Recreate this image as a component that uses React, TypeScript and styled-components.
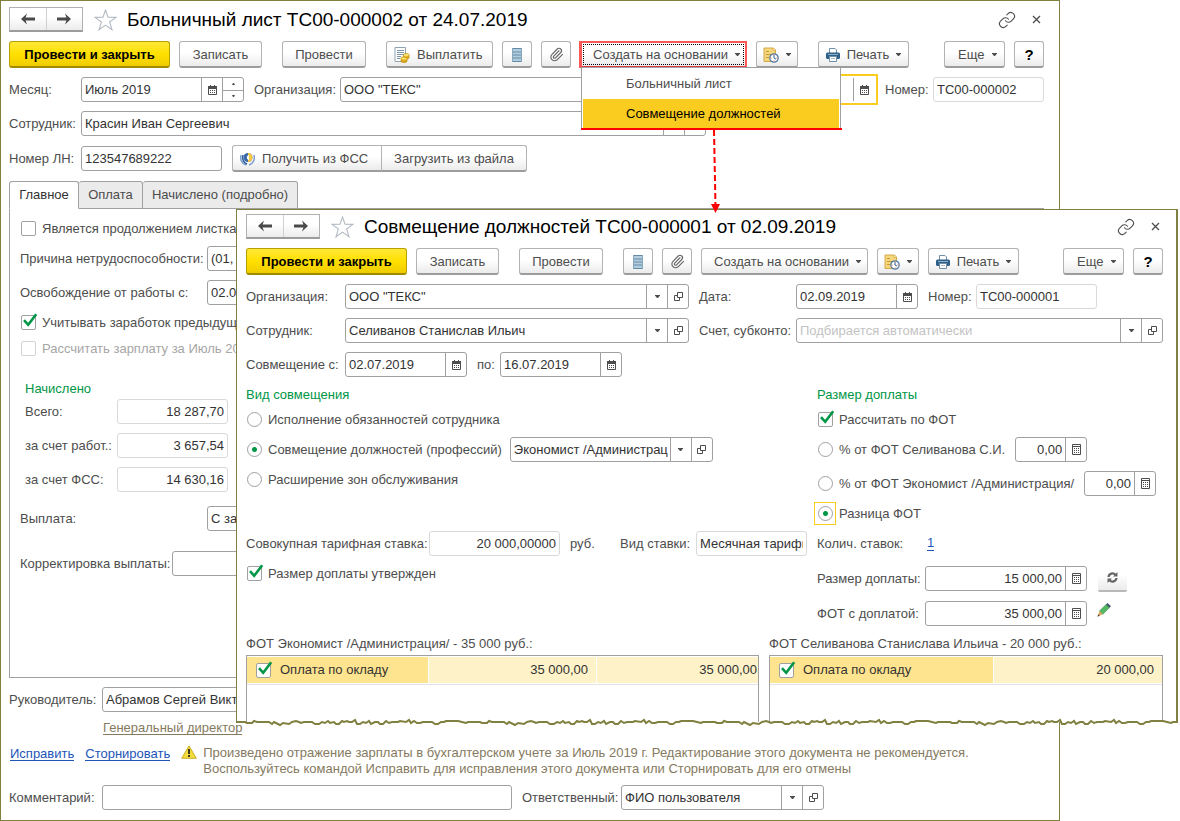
import React from 'react';
import styled, { createGlobalStyle, css } from 'styled-components';
import { Link, Paperclip } from 'lucide-react';

const OLIVE = '#808040';
const LINE = '#a0a0a0';
const GREEN = '#009646';
const AMBER = '#fbcc20';

const GlobalStyle = createGlobalStyle`
  *, *::before, *::after { box-sizing: border-box; }
  body {
    margin: 0;
    background: #fff;
    color: #4d4d4d;
    font: 13px/16px "Liberation Sans", Arial, sans-serif;
  }
  button, input, select {
    margin: 0;
    padding: 0;
    font: inherit;
    color: inherit;
  }
  svg { display: block; flex: none; }
`;

/* ---------- windows ---------- */

const Desktop = styled.main`
  position: relative;
  min-width: 1100px;
`;

const BackWindow = styled.section`
  display: flex;
  flex-direction: column;
  gap: 9px;
  margin-right: 120px;
  padding: 6px 15px 10px 8px;
  border: 1px solid ${OLIVE};
`;

const FrontWindow = styled.section`
  position: absolute;
  z-index: 1;
  top: 209px;
  left: 236px;
  right: 2px;
  display: flex;
  flex-direction: column;
  gap: 9px;
  padding: 4px 13px 0 9px;
  background: #fff;
  border: solid ${OLIVE};
  border-width: 1px 2px 0 1px;
`;

const TornSvg = styled.svg`
  position: absolute;
  left: -1px;
  bottom: -6px;
  width: calc(100% + 3px);
  height: 12px;
`;

/* ---------- title bar ---------- */

const TitleBar = styled.header`
  display: flex;
  align-items: center;
  height: 25px;
`;

const NavGroup = styled.div`
  display: flex;
  width: 74px;
  height: 25px;
  border: 1px solid #b0b0b0;
  border-bottom: 2px solid #9c9c9c;
  background: linear-gradient(#fff 40%, #ececec);
`;

const NavButton = styled.button`
  flex: 1;
  display: grid;
  place-items: center;
  border: 0;
  background: none;
  & + & { border-left: 1px solid #d0d0d0; }
`;

const PlainButton = styled.button`
  display: grid;
  place-items: center;
  border: 0;
  background: none;
`;

const StarButton = styled(PlainButton)`
  margin: 0 10px 0 11px;
`;

const Title = styled.h1`
  margin: 0;
  font-size: 19px;
  line-height: 24px;
  font-weight: 400;
  color: #000;
  white-space: nowrap;
`;

const TitleTools = styled.div`
  display: flex;
  align-items: center;
  gap: 16px;
  margin-left: auto;
  padding-right: 3px;
`;

/* ---------- buttons ---------- */

const Toolbar = styled.div`
  display: flex;
  gap: 9px;
`;

const Cluster = styled.div<{ $gap?: number; $push?: boolean }>`
  display: flex;
  gap: 9px;
  margin-left: ${p => (p.$push ? 'auto' : `${p.$gap ?? 0}px`)};
`;

const Button = styled.button<{ $w: number; $align?: string; $marked?: boolean }>`
  display: flex;
  align-items: center;
  justify-content: ${p => p.$align ?? 'center'};
  gap: 7px;
  width: ${p => p.$w}px;
  height: 27px;
  padding: 1px 7px 0;
  border: 1px solid #b3b3b3;
  border-bottom: 2px solid #9c9c9c;
  border-radius: 3px;
  background: linear-gradient(#fff 45%, #ebebeb);
  white-space: nowrap;
  ${p =>
    p.$marked &&
    css`
      border: 2px solid #f85a5a;
      border-bottom-color: #e03c46;
      border-radius: 0;
      box-shadow: -1px 0 0 #f85a5a;
      outline: 1px dotted #000;
      outline-offset: -4px;
      padding: 0 6px;
    `}
`;

const Caption = styled.span`
  padding-left: 6px;
  margin-right: auto;
`;

const PrimaryButton = styled(Button)`
  border-color: #b8a000;
  border-bottom-color: #a08a00;
  background: linear-gradient(#ffe838, #ffe000 50%, #f0cc00);
  color: #000;
  font-weight: 700;
`;

const HelpButton = styled(Button)`
  color: #000;
  font-size: 15px;
  font-weight: 700;
`;

const JoinedButtons = styled.div`
  display: flex;
  margin-left: 10px;
  ${Button}:first-child { border-radius: 3px 0 0 3px; }
  ${Button}:last-child { border-radius: 0 3px 3px 0; margin-left: -1px; }
`;

const MenuAnchor = styled.div`
  position: relative;
`;

const Menu = styled.div`
  position: absolute;
  top: 26px;
  left: 1px;
  width: 260px;
  padding: 1px 1px 0;
  background: #fff;
  border: 1px solid ${LINE};
  border-bottom: 0;
`;

const MenuItem = styled.button<{ $active?: boolean }>`
  display: block;
  width: 100%;
  height: 30px;
  padding: 0 0 0 43px;
  border: 0;
  background: ${p => (p.$active ? AMBER : '#fff')};
  color: ${p => (p.$active ? '#000' : '#4d4d4d')};
  text-align: left;
  & + & { height: 29px; }
`;

const MenuUnderline = styled.div`
  height: 2px;
  margin: 0 -3px 0 -2px;
  background: #ff0000;
`;

const ArrowSvg = styled.svg`
  position: absolute;
  z-index: 2;
  top: 88px;
  left: 128px;
`;

/* ---------- form rows and fields ---------- */

const Row = styled.div<{ $h?: number; $mt?: number }>`
  display: flex;
  align-items: center;
  height: ${p => p.$h ?? 25}px;
  margin-top: ${p => p.$mt ?? 0}px;
`;

const Label = styled.label<{ $w?: number; $gap?: number }>`
  flex: none;
  width: ${p => (p.$w ? `${p.$w}px` : 'auto')};
  margin-left: ${p => p.$gap ?? 0}px;
  white-space: nowrap;
`;

const FieldBox = styled.div<{ $w?: number; $gap?: number; $soft?: boolean; $focus?: boolean }>`
  flex: ${p => (p.$w ? `0 0 ${p.$w}px` : '1 1 0')};
  display: flex;
  min-width: 0;
  height: 25px;
  margin-left: ${p => p.$gap ?? 0}px;
  border: 1px solid ${p => (p.$focus ? '#fff' : p.$soft ? '#d9d9d9' : LINE)};
  border-radius: 3px;
  background: #fff;
  color: #333;
  ${p => p.$focus && css`border-radius: 0; outline: 2px solid ${AMBER}; outline-offset: 1px;`}
`;

const TextInput = styled.input<{ $right?: boolean }>`
  flex: 1;
  width: 0;
  min-width: 0;
  padding: 0 3px;
  border: 0;
  outline: 0;
  background: none;
  text-align: ${p => (p.$right ? 'right' : 'left')};
`;

const SideButton = styled.button`
  flex: 0 0 21px;
  display: grid;
  place-items: center;
  border: 0;
  border-left: 1px solid ${LINE};
  background: none;
`;

const Spinner = styled.div`
  flex: 0 0 21px;
  display: grid;
  grid-template-rows: 1fr 1fr;
  border-left: 1px solid ${LINE};
`;

const SpinButton = styled.button`
  display: grid;
  place-items: center;
  border: 0;
  background: none;
  & + & { border-top: 1px solid ${LINE}; }
`;

const SelectCell = styled.div`
  flex: 1;
  min-width: 0;
  display: grid;
  grid-template-columns: minmax(0, 1fr);
  > * { grid-area: 1 / 1; }
`;

const Select = styled.select<{ $empty?: boolean }>`
  appearance: none;
  width: 100%;
  padding: 0 23px 0 3px;
  border: 0;
  outline: 0;
  background: none;
  color: ${p => (p.$empty ? '#c3c3c3' : '#333')};
`;

const SelectArrow = styled.span`
  justify-self: end;
  display: grid;
  place-items: center;
  width: 21px;
  border-left: 1px solid ${LINE};
  pointer-events: none;
`;

const CheckLabel = styled.label<{ $off?: boolean }>`
  display: flex;
  align-items: center;
  gap: 6px;
  height: 17px;
  white-space: nowrap;
  color: ${p => (p.$off ? '#a6a6a6' : 'inherit')};
`;

const MarkCell = styled.span<{ $focus?: boolean }>`
  display: grid;
  grid-template-columns: 15px;
  justify-content: end;
  align-items: center;
  width: 16px;
  height: 17px;
  ${p => p.$focus && css`outline: 1px solid ${AMBER}; outline-offset: 2px;`}
  > * { grid-area: 1 / 1; }
  svg { pointer-events: none; overflow: visible; }
`;

const CheckInput = styled.input`
  appearance: none;
  width: 15px;
  height: 15px;
  border: 1px solid ${LINE};
  border-radius: 2px;
  background: #fff;
  & + svg { visibility: hidden; }
  &:checked + svg { visibility: visible; }
  &:disabled { border-color: #d4d4d4; }
`;

const RadioInput = styled.input`
  appearance: none;
  width: 15px;
  height: 15px;
  border: 1px solid ${LINE};
  border-radius: 50%;
  background: #fff;
  &:checked { background: radial-gradient(circle, ${GREEN} 2px, #fff 3px); }
`;

const GroupTitle = styled.h2`
  margin: 0;
  height: 16px;
  font-size: 13px;
  line-height: 17px;
  font-weight: 400;
  color: ${GREEN};
`;

/* ---------- tabs ---------- */

const TabArea = styled.div``;

const TabList = styled.div`
  position: relative;
  display: flex;
  margin-bottom: -1px;
`;

const Tab = styled.button<{ $w: number; $active?: boolean }>`
  width: ${p => p.$w}px;
  height: 28px;
  padding: 0;
  border: 1px solid ${LINE};
  border-left-width: ${p => (p.$active ? 1 : 0)}px;
  border-bottom-color: ${p => (p.$active ? '#fff' : LINE)};
  border-radius: 3px 3px 0 0;
  background: ${p => (p.$active ? '#fff' : '#ebebeb')};
  color: ${p => (p.$active ? '#333' : '#4d4d4d')};
`;

const TabPanel = styled.div`
  display: flex;
  flex-direction: column;
  gap: 9px;
  padding: 11px 10px 101px;
  border: 1px solid ${LINE};
`;

const Accrued = styled.section`
  display: flex;
  flex-direction: column;
  gap: 9px;
  padding: 14px 0 0 5px;
  ${GroupTitle} { margin-bottom: -6px; }
`;

/* ---------- footer of the sick-leave document ---------- */

const RoleLink = styled.a`
  align-self: flex-start;
  margin-left: 94px;
  height: 14px;
  line-height: 13px;
  border-bottom: 1px solid #857a60;
  color: #857a60;
  text-decoration: none;
`;

const Notice = styled.div`
  display: flex;
  gap: 11px;
  height: 32px;
  padding: 1px 0 0 1px;
`;

const ActionLink = styled.a`
  height: 16px;
  line-height: 17px;
  border-bottom: 1px solid #1d55b8;
  color: #1d55b8;
  text-decoration: none;
`;

const NoticeBody = styled.div`
  display: flex;
  gap: 6px;
`;

const NoticeText = styled.p`
  margin: 0;
  color: #857a60;
`;

/* ---------- combination document ---------- */

const Columns = styled.div`
  display: grid;
  grid-template-columns: minmax(561px, 1fr) 346px;
  column-gap: 10px;
`;

const Column = styled.div`
  display: flex;
  flex-direction: column;
  gap: 9px;
`;

const CountLink = styled.a`
  margin-left: 24px;
  border-bottom: 1px solid #1d55b8;
  line-height: 14px;
  color: #1d55b8;
  text-decoration: none;
`;

const RefreshButton = styled.button`
  display: grid;
  place-items: center;
  width: 29px;
  height: 27px;
  margin-left: 11px;
  border: 0;
  border-bottom: 2px solid #b8b8b8;
  border-radius: 2px;
  background: linear-gradient(#fff 40%, #ebebeb);
`;

const PencilButton = styled(PlainButton)`
  margin: 0 0 8px 10px;
`;

const TableColumns = styled.div`
  display: grid;
  grid-template-columns: 513fr 394fr;
  column-gap: 10px;
`;

const TableBlock = styled.section`
  display: flex;
  flex-direction: column;
  gap: 3px;
  padding-top: 1px;
`;

const TableFrame = styled.div`
  height: 67px;
  padding-top: 1px;
  border: solid ${LINE};
  border-width: 1px 1px 0;
`;

const Table = styled.table`
  width: 100%;
  table-layout: fixed;
  border-collapse: separate;
  border-spacing: 0;
  border-bottom: 1px solid #e3e3e3;
  color: #333;
`;

const Cell = styled.td<{ $main?: boolean; $w?: number; $tight?: boolean }>`
  width: ${p => (p.$w ? `${p.$w}px` : 'auto')};
  height: 27px;
  padding: 0 ${p => (p.$tight ? 1 : 8)}px 0 8px;
  border-bottom: 1px solid #fff;
  background: ${p => (p.$main ? '#ffe48f' : '#fdf2c8')};
  text-align: ${p => (p.$main ? 'left' : 'right')};
  & + & { border-left: 1px solid #fff; }
  ${CheckLabel} { gap: 9px; color: #333; }
`;

/* ---------- icons ---------- */

const Caret = () => (
  <svg width="5" height="3" viewBox="0 0 5 3" fill="#4d4d4d"><path d="M0 0h5v.6L3 3H2L0 .6z" /></svg>
);

const SmallCaret = ({ up }: { up?: boolean }) => (
  <svg width="3" height="2" viewBox="0 0 3 2" fill="#4d4d4d"><path d={up ? 'M0 2h3L2 0H1z' : 'M0 0h3L2 2H1z'} /></svg>
);

const ArrowIcon = ({ right }: { right?: boolean }) => (
  <svg width="14" height="12" viewBox="0 0 14 12" fill="#4a4a4a">
    <path d={right ? 'M14 6 8 .5 9.400 4.500H0v3h9.400L8 11.500z' : 'M0 6 6 .5 4.600 4.500H14v3H4.600L6 11.500z'} />
  </svg>
);

const StarIcon = () => (
  <svg width="23" height="22" viewBox="0 0 23 22" fill="#fff" stroke="#b4bbc4" strokeWidth="1.1">
    <path d="M11.500 1 14 8.300 22 8.400 15.600 13 18 20.800 11.500 16.100 5 20.800 7.400 13 1 8.400 9 8.300z" />
  </svg>
);

const CloseIcon = () => (
  <svg width="9" height="9" viewBox="0 0 9 9" stroke="#4d4d4d" strokeWidth="1.3"><path d="m1 1 7 7M8 1 1 8" /></svg>
);

const ListIcon = () => (
  <svg width="10" height="14" viewBox="0 0 10 14">
    <rect width="10" height="14" fill="#b3cddd" />
    <path d="M0 .5h10M0 4h10M0 7h10M0 10h10M0 13.500h10" stroke="#628aa6" />
    <path d="M.5 0v14M9.500 0v14" stroke="#86a8bf" />
  </svg>
);

const PayIcon = () => (
  <svg width="16" height="16" viewBox="0 0 16 16">
    <path d="M1 .5h10.500v9L8 14.500H1z" fill="#fff" stroke="#8ea3b4" />
    <path d="M3 3.500h7M3 5.500h7M3 7.500h7M3 9.500h4M3 11.500h3" stroke="#7f95a6" />
    <path d="M7 11v3c0 1 1 1.500 3 1.500s3-.5 3-1.500v-2c1 0 2-.5 2-1V8c0-1-1-1.500-2.700-1.500S9.500 7 9.500 8v2C8 10 7 10.300 7 11z" fill="#e8b923" stroke="#b98a10" strokeWidth=".7" />
    <ellipse cx="12.200" cy="8" rx="2.500" ry="1.100" fill="#fbe27a" />
    <ellipse cx="10" cy="11.500" rx="2.700" ry="1.100" fill="#fbe27a" />
    <path d="M7 13.500c1 1 5 1 6 0M10 10c1 .8 4 .8 5 0" fill="none" stroke="#b98a10" strokeWidth=".6" />
  </svg>
);

const ScheduleIcon = () => (
  <svg width="16" height="16" viewBox="0 0 16 16">
    <path d="M1 1h9.500l2 2v11.500H1z" fill="#f6d77c" stroke="#d0a848" />
    <path d="M10 1v2.500h2.500" fill="#fff1b8" stroke="#d0a848" strokeWidth=".7" />
    <path d="M3 4.500h3M3 7.500h5M3 10.500h3" stroke="#c39a3a" />
    <circle cx="11" cy="11" r="4.200" fill="#fff" stroke="#4d7ba5" strokeWidth="1.200" />
    <path d="M11 8.200V11l2 1.200" stroke="#27618f" fill="none" />
    <path d="M11 7.500v1M11 13.500v1M7.500 11h1M13.500 11h1" stroke="#d65a4a" />
  </svg>
);

const PrintIcon = () => (
  <svg width="14" height="14" viewBox="0 0 14 14">
    <path d="M3.500 6V.5H9L10.500 2v4" fill="#fff" stroke="#6f90aa" />
    <rect y="4.500" width="14" height="6.500" rx="1.500" fill="#2f608a" />
    <path d="M2 6.500h10" stroke="#8fb0c8" />
    <path d="M3.500 8.500h7v5h-7z" fill="#fff" stroke="#6f90aa" />
    <path d="M5 10.500h4" stroke="#a9bccb" />
  </svg>
);

const FssIcon = () => (
  <svg width="15" height="14" viewBox="0 0 15 14">
    <path d="M1.200 3C-.5 7 2 12 6 13M13.800 3c1.700 4-.8 9-4.800 10" fill="none" stroke="#7f9fcd" strokeWidth="1.500" />
    <path d="M3 3C1.500 7 4 11 7 12.200" fill="none" stroke="#2f5d9e" strokeWidth="1.500" />
    <circle cx="8" cy="5.500" r="4.500" fill="#3767a8" />
    <path d="M8 1a4.500 4.500 0 0 1 0 9z" fill="#f7c843" />
    <path d="M9 3C6 3.500 6 7.500 9 8z" fill="#fff" />
  </svg>
);

const CalendarIcon = () => (
  <svg width="9" height="10" viewBox="0 0 9 10">
    <path d="M.5 2.500h8v7h-8z" fill="#fff" stroke="#4d4d4d" />
    <path d="M0 1h9v3H0zM2 0h1v2H2zM6 0h1v2H6z" fill="#4d4d4d" />
    <path d="M2 5.500h5M2 7.500h5" stroke="#4d4d4d" strokeDasharray="1 1" />
  </svg>
);

const CalcIcon = () => (
  <svg width="9" height="11" viewBox="0 0 9 11">
    <path d="M.5.5h8v10h-8z" fill="#fff" stroke="#4d4d4d" />
    <path d="M1 2.500h7" stroke="#4d4d4d" />
    <path d="M2 4.500h5M2 6.500h5M2 8.500h5" stroke="#4d4d4d" strokeDasharray="1 1" />
  </svg>
);

const OpenIcon = () => (
  <svg width="9" height="9" viewBox="0 0 9 9" fill="none" stroke="#4d4d4d">
    <path d="M3.500.5h5v5h-5zM3 3.500H.5v5h5V6" />
  </svg>
);

const CheckIcon = () => (
  <svg width="15" height="15" viewBox="0 0 15 15" fill="none" stroke={GREEN} strokeWidth="2.600">
    <path d="M3 5.200 7.200 9.800 15.200 -.8" />
  </svg>
);

const RefreshIcon = () => (
  <svg width="11" height="11" viewBox="0 0 11 11">
    <path d="M1.500 5A4 4 0 0 1 8.500 2.800M9.500 6A4 4 0 0 1 2.500 8.200" fill="none" stroke="#666" strokeWidth="2.200" />
    <path d="M10.500 0v4.500H6zM.5 11V6.500H5z" fill="#666" />
  </svg>
);

const PencilIcon = () => (
  <svg width="14" height="14" viewBox="0 0 14 14">
    <path d="M2.500 8 9 1.500 12.300 4.800 5.800 11.300z" fill="#53b963" stroke="#3d8d4b" strokeWidth=".6" />
    <path d="M9 1.500 10.500 0 14 3.300 12.300 4.800z" fill="#3e5567" />
    <path d="M2.500 8 .8 13.200 5.800 11.300z" fill="#d9a35a" />
    <path d="M1.300 11.300.3 13.700l2.500-1z" fill="#5a3d20" />
  </svg>
);

const WarningIcon = () => (
  <svg width="16" height="14" viewBox="0 0 16 14">
    <path d="M8 .8 15.300 13.300H.7z" fill="#f3dc3c" stroke="#c9ae2a" strokeLinejoin="round" />
    <path d="M7 4h2v5H7zM7 10h2v2H7z" fill="#3f3a1c" />
  </svg>
);

const tearProfile: Array<[number, number]> = [
  [0, 6], [9, 6], [11, 7], [16, 7], [18, 5], [21, 6], [30, 6], [33, 6], [36, 8], [38, 6], [42, 8], [44, 9],
  [47, 7], [53, 8], [56, 6], [60, 5], [63, 6], [65, 7], [68, 6], [76, 6], [79, 8], [83, 8], [86, 6], [89, 7],
  [92, 5], [94, 7], [98, 6], [100, 8], [103, 8], [106, 5], [108, 6], [111, 5], [113, 6], [116, 6], [119, 4],
  [121, 8], [124, 8], [127, 6], [130, 7], [133, 5], [135, 8], [139, 6], [142, 6], [144, 8], [147, 8], [150, 5],
  [153, 7], [156, 6], [162, 6], [164, 5], [170, 6], [173, 4], [175, 7], [178, 5], [181, 7], [184, 7], [187, 6],
  [196, 6], [199, 8], [202, 8], [205, 6], [208, 6], [210, 5], [222, 5], [226, 6], [230, 7], [232, 6],
];

const tearPath =
  'M' +
  [0, 235, 470, 705]
    .flatMap(shift => tearProfile.map(([x, y]) => `${x + shift} ${y}`))
    .concat('942 6')
    .join('L');

const TornEdge = () => (
  <TornSvg viewBox="0 0 942 12" preserveAspectRatio="none" aria-hidden="true">
    <path d={tearPath} fill="none" stroke={OLIVE} strokeWidth="2" vectorEffect="non-scaling-stroke" />
  </TornSvg>
);

/* ---------- composed controls ---------- */

type FieldProps = {
  id: string;
  value: string;
  w?: number;
  gap?: number;
  soft?: boolean;
  focus?: boolean;
  right?: boolean;
  name?: string;
  children?: React.ReactNode;
};

const Field = ({ id, value, w, gap, soft, focus, right, name, children }: FieldProps) => (
  <FieldBox $w={w} $gap={gap} $soft={soft} $focus={focus}>
    <TextInput id={id} defaultValue={value} readOnly={soft} $right={right} aria-label={name} />
    {children}
  </FieldBox>
);

const DateField = (p: FieldProps) => (
  <Field {...p}><SideButton aria-label="Выбрать дату"><CalendarIcon /></SideButton></Field>
);

const NumberField = (p: FieldProps) => (
  <Field {...p} right><SideButton aria-label="Калькулятор"><CalcIcon /></SideButton></Field>
);

const Combo = ({ id, value, w, name, gap, empty }: FieldProps & { empty?: boolean }) => (
  <FieldBox $w={w} $gap={gap}>
    <SelectCell>
      <Select id={id} $empty={empty} aria-label={name}><option>{value}</option></Select>
      <SelectArrow><Caret /></SelectArrow>
    </SelectCell>
    <SideButton aria-label="Открыть"><OpenIcon /></SideButton>
  </FieldBox>
);

const Check = ({ text, checked, off }: { text: string; checked?: boolean; off?: boolean }) => (
  <CheckLabel $off={off}>
    <MarkCell><CheckInput type="checkbox" defaultChecked={checked} disabled={off} /><CheckIcon /></MarkCell>
    {text}
  </CheckLabel>
);

const Radio = ({ text, group, checked, focus }: { text: string; group: string; checked?: boolean; focus?: boolean }) => (
  <CheckLabel>
    <MarkCell $focus={focus}><RadioInput type="radio" name={group} defaultChecked={checked} /></MarkCell>
    {text}
  </CheckLabel>
);

const DocumentHeader = ({ title }: { title: string }) => (
  <TitleBar>
    <NavGroup>
      <NavButton aria-label="Назад"><ArrowIcon /></NavButton>
      <NavButton aria-label="Вперед"><ArrowIcon right /></NavButton>
    </NavGroup>
    <StarButton aria-label="В избранное"><StarIcon /></StarButton>
    <Title>{title}</Title>
    <TitleTools>
      <PlainButton aria-label="Ссылка"><Link size={18} strokeWidth={1.5} color="#505050" /></PlainButton>
      <PlainButton aria-label="Закрыть"><CloseIcon /></PlainButton>
    </TitleTools>
  </TitleBar>
);

const CommandBar = ({ pay, menu }: { pay?: boolean; menu?: React.ReactNode }) => (
  <Toolbar>
    <PrimaryButton $w={161}>Провести и закрыть</PrimaryButton>
    <Button $w={83}>Записать</Button>
    <Cluster $gap={11}><Button $w={84}>Провести</Button></Cluster>
    <Cluster $gap={11}>
      {pay && <Button $w={107} $align="flex-start"><PayIcon />Выплатить</Button>}
      <Button $w={30} aria-label="Реестр"><ListIcon /></Button>
      <Button $w={30} aria-label="Присоединенные файлы"><Paperclip size={15} strokeWidth={1.8} color="#666" /></Button>
      <MenuAnchor>
        <Button $w={167} $marked={!!menu}><Caption>Создать на основании</Caption><Caret /></Button>
        {menu}
      </MenuAnchor>
      <Button $w={42} aria-label="Отложить"><ScheduleIcon /><Caret /></Button>
    </Cluster>
    <Cluster $gap={pay ? 11 : 0}>
      <Button $w={91}><PrintIcon />Печать<Caret /></Button>
    </Cluster>
    <Cluster $push>
      <Button $w={61}><Caption>Еще</Caption><Caret /></Button>
      <HelpButton $w={30}>?</HelpButton>
    </Cluster>
  </Toolbar>
);

const CreateMenu = () => (
  <>
    <Menu>
      <MenuItem>Больничный лист</MenuItem>
      <MenuItem $active>Совмещение должностей</MenuItem>
      <MenuUnderline />
    </Menu>
    <ArrowSvg width="14" height="86" viewBox="0 0 14 86" aria-hidden="true">
      <path d="M6 1 7.500 78" stroke="#f00" strokeWidth="2" strokeDasharray="6 3" />
      <path d="M3 75h9L7.500 84z" fill="#f00" />
    </ArrowSvg>
  </>
);

const SickLeave = () => (
  <BackWindow>
    <DocumentHeader title="Больничный лист ТС00-000002 от 24.07.2019" />
    <CommandBar pay menu={<CreateMenu />} />
    <Row>
      <Label $w={72} htmlFor="month">Месяц:</Label>
      <Field id="month" value="Июль 2019" w={163}>
        <SideButton aria-label="Выбрать месяц"><CalendarIcon /></SideButton>
        <Spinner>
          <SpinButton aria-label="Следующий месяц"><SmallCaret up /></SpinButton>
          <SpinButton aria-label="Предыдущий месяц"><SmallCaret /></SpinButton>
        </Spinner>
      </Field>
      <Label $w={86} $gap={10} htmlFor="org">Организация:</Label>
      <Combo id="org" value={'ООО "ТЕКС"'} />
      <DateField id="date" name="Дата" value="" w={122} gap={10} focus />
      <Label $w={48} $gap={10} htmlFor="number">Номер:</Label>
      <Field id="number" value="ТС00-000002" w={111} soft />
    </Row>
    <Row>
      <Label $w={72} htmlFor="person">Сотрудник:</Label>
      <Combo id="person" value="Красин Иван Сергеевич" w={625} />
    </Row>
    <Row $h={27}>
      <Label $w={72} htmlFor="sheet">Номер ЛН:</Label>
      <Field id="sheet" value="123547689222" w={141} />
      <JoinedButtons>
        <Button $w={150} $align="flex-start"><FssIcon />Получить из ФСС</Button>
        <Button $w={146}>Загрузить из файла</Button>
      </JoinedButtons>
    </Row>
    <TabArea>
      <TabList role="tablist">
        <Tab role="tab" aria-selected $w={70} $active>Главное</Tab>
        <Tab role="tab" $w={64}>Оплата</Tab>
        <Tab role="tab" $w={155}>Начислено (подробно)</Tab>
      </TabList>
      <TabPanel role="tabpanel">
        <Check text="Является продолжением листка" />
        <Row>
          <Label $w={187} htmlFor="reason">Причина нетрудоспособности:</Label>
          <Combo id="reason" value="(01, 02) Заболевание" w={400} />
        </Row>
        <Row>
          <Label $w={187} htmlFor="leave">Освобождение от работы с:</Label>
          <DateField id="leave" value="02.07.2019" w={122} />
        </Row>
        <Check text="Учитывать заработок предыдущих" checked />
        <Check text="Рассчитать зарплату за Июль 2019" off />
        <Accrued>
          <GroupTitle>Начислено</GroupTitle>
          <Row>
            <Label $w={92} htmlFor="total">Всего:</Label>
            <Field id="total" value="18 287,70" w={111} soft right />
          </Row>
          <Row>
            <Label $w={92} htmlFor="employer">за счет работ.:</Label>
            <Field id="employer" value="3 657,54" w={111} soft right />
          </Row>
          <Row>
            <Label $w={92} htmlFor="fund">за счет ФСС:</Label>
            <Field id="fund" value="14 630,16" w={111} soft right />
          </Row>
        </Accrued>
        <Row $mt={5}>
          <Label $w={187} htmlFor="payment">Выплата:</Label>
          <Combo id="payment" value="С зарплатой" w={200} />
        </Row>
        <Row $mt={11}>
          <Label $w={152} htmlFor="fix">Корректировка выплаты:</Label>
          <NumberField id="fix" value="" w={122} />
        </Row>
      </TabPanel>
    </TabArea>
    <Row>
      <Label $w={93} htmlFor="chief">Руководитель:</Label>
      <Combo id="chief" value="Абрамов Сергей Викторович" w={300} />
    </Row>
    <RoleLink href="#role">Генеральный директор</RoleLink>
    <Notice>
      <ActionLink href="#fix">Исправить</ActionLink>
      <ActionLink href="#reverse">Сторнировать</ActionLink>
      <NoticeBody>
        <WarningIcon />
        <NoticeText>
          Произведено отражение зарплаты в бухгалтерском учете за Июль 2019 г. Редактирование этого документа не рекомендуется.
          <br />
          Воспользуйтесь командой Исправить для исправления этого документа или Сторнировать для его отмены
        </NoticeText>
      </NoticeBody>
    </Notice>
    <Row>
      <Label $w={93} htmlFor="comment">Комментарий:</Label>
      <Field id="comment" value="" w={410} />
      <Label $w={99} $gap={10} htmlFor="owner">Ответственный:</Label>
      <Combo id="owner" value="ФИО пользователя" w={203} />
    </Row>
  </BackWindow>
);

const Combination = () => (
  <FrontWindow>
    <DocumentHeader title="Совмещение должностей ТС00-000001 от 02.09.2019" />
    <CommandBar />
    <Row>
      <Label $w={99} htmlFor="c-org">Организация:</Label>
      <Combo id="c-org" value={'ООО "ТЕКС"'} w={344} />
      <Label $w={97} $gap={10} htmlFor="c-date">Дата:</Label>
      <DateField id="c-date" value="02.09.2019" w={122} />
      <Label $w={48} $gap={10} htmlFor="c-number">Номер:</Label>
      <Field id="c-number" value="ТС00-000001" w={121} soft />
    </Row>
    <Row>
      <Label $w={99} htmlFor="c-person">Сотрудник:</Label>
      <Combo id="c-person" value="Селиванов Станислав Ильич" w={344} />
      <Label $w={97} $gap={10} htmlFor="c-account">Счет, субконто:</Label>
      <Combo id="c-account" value="Подбирается автоматически" empty />
    </Row>
    <Row>
      <Label $w={99} htmlFor="c-from">Совмещение с:</Label>
      <DateField id="c-from" value="02.07.2019" w={122} />
      <Label $w={23} $gap={10} htmlFor="c-to">по:</Label>
      <DateField id="c-to" value="16.07.2019" w={122} />
    </Row>
    <Columns>
      <Column>
        <GroupTitle>Вид совмещения</GroupTitle>
        <Radio group="kind" text="Исполнение обязанностей сотрудника" />
        <Row>
          <Radio group="kind" text="Совмещение должностей (профессий)" checked />
          <Combo id="c-post" name="Должность" value="Экономист /Администрация/" w={203} gap={8} />
        </Row>
        <Radio group="kind" text="Расширение зон обслуживания" />
        <Row $mt={34}>
          <Label $w={183} htmlFor="c-rate">Совокупная тарифная ставка:</Label>
          <Field id="c-rate" value="20 000,00000" w={131} soft right />
          <Label as="span" $w={40} $gap={10}>руб.</Label>
          <Label $w={76} $gap={10} htmlFor="c-kind">Вид ставки:</Label>
          <Field id="c-kind" value="Месячная тарифная ставка" w={111} soft />
        </Row>
        <Check text="Размер доплаты утвержден" checked />
      </Column>
      <Column>
        <GroupTitle>Размер доплаты</GroupTitle>
        <Check text="Рассчитать по ФОТ" checked />
        <Row>
          <Radio group="extra" text="% от ФОТ Селиванова С.И." />
          <NumberField id="c-p1" name="Процент от ФОТ сотрудника" value="0,00" w={72} gap={10} />
        </Row>
        <Row>
          <Radio group="extra" text="% от ФОТ Экономист /Администрация/" />
          <NumberField id="c-p2" name="Процент от ФОТ должности" value="0,00" w={72} gap={10} />
        </Row>
        <Radio group="extra" text="Разница ФОТ" checked focus />
        <Row>
          <Label as="span" $w={86}>Колич. ставок:</Label>
          <CountLink href="#count">1</CountLink>
        </Row>
        <Row $h={27}>
          <Label $w={108} htmlFor="c-extra">Размер доплаты:</Label>
          <NumberField id="c-extra" value="15 000,00" w={162} />
          <RefreshButton aria-label="Пересчитать"><RefreshIcon /></RefreshButton>
        </Row>
        <Row>
          <Label $w={108} htmlFor="c-fund">ФОТ с доплатой:</Label>
          <NumberField id="c-fund" value="35 000,00" w={162} />
          <PencilButton aria-label="Изменить"><PencilIcon /></PencilButton>
        </Row>
      </Column>
    </Columns>
    <TableColumns>
      <TableBlock>
        <div>ФОТ Экономист /Администрация/ - 35 000 руб.:</div>
        <TableFrame>
          <Table>
            <tbody>
              <tr>
                <Cell $main $w={181}><Check text="Оплата по окладу" checked /></Cell>
                <Cell $w={168}>35 000,00</Cell>
                <Cell $tight>35 000,00</Cell>
              </tr>
            </tbody>
          </Table>
        </TableFrame>
      </TableBlock>
      <TableBlock>
        <div>ФОТ Селиванова Станислава Ильича - 20 000 руб.:</div>
        <TableFrame>
          <Table>
            <tbody>
              <tr>
                <Cell $main $w={223}><Check text="Оплата по окладу" checked /></Cell>
                <Cell>20 000,00</Cell>
              </tr>
            </tbody>
          </Table>
        </TableFrame>
      </TableBlock>
    </TableColumns>
    <TornEdge />
  </FrontWindow>
);

export default function App() {
  return (
    <Desktop>
      <GlobalStyle />
      <SickLeave />
      <Combination />
    </Desktop>
  );
}
